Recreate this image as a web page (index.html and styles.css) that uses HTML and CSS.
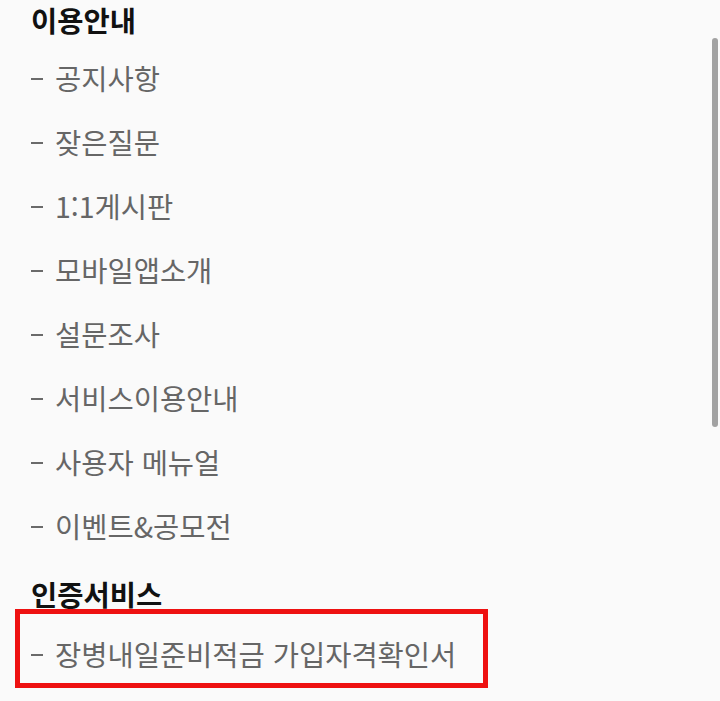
FILE: index.html
```html
<!DOCTYPE html>
<html lang="ko">
<head>
<meta charset="utf-8">
<link rel="stylesheet" href="styles.css">
</head>
<body>
<div class="page">
  <h2 class="heading">이용안내</h2>
  <ul class="menu">
    <li class="item"><span class="dash"></span>공지사항</li>
    <li class="item"><span class="dash"></span>잦은질문</li>
    <li class="item"><span class="dash"></span>1:1게시판</li>
    <li class="item"><span class="dash"></span>모바일앱소개</li>
    <li class="item"><span class="dash"></span>설문조사</li>
    <li class="item"><span class="dash"></span>서비스이용안내</li>
    <li class="item"><span class="dash"></span>사용자 메뉴얼</li>
    <li class="item"><span class="dash"></span>이벤트&amp;공모전</li>
  </ul>
  <h2 class="heading heading-2">인증서비스</h2>
  <div class="highlight">
    <div class="item item-hl"><span class="dash"></span>장병내일준비적금 가입자격확인서</div>
  </div>
</div>
<div class="scrollbar"></div>
</body>
</html>
```
FILE: styles.css
```css
html, body {
  margin: 0;
  padding: 0;
  background: #fafafa;
}
body {
  width: 720px;
  height: 701px;
  overflow: hidden;
  position: relative;
  font-family: "Noto Sans CJK KR", "Noto Sans", sans-serif;
}
.page {
  padding-left: 31px;
}
.heading {
  margin: 0;
  font-size: 28.5px;
  font-weight: 700;
  color: #111;
  line-height: 40px;
}
.menu {
  list-style: none;
  margin: 6px 0 0 0;
  padding: 0;
}
.item {
  font-size: 28.5px;
  color: #666;
  line-height: 64px;
  display: flex;
  align-items: center;
}
.dash {
  flex: none;
  width: 12px;
  height: 2px;
  background: #6a6a6a;
  margin-right: 12px;
  margin-top: 2px;
}
.heading-2 {
  margin-top: 20px;
  line-height: 31px;
}
.highlight {
  margin-left: -16px;
  width: 473px;
  border: 5px solid #ee1111;
  padding-left: 11px;
  height: 79px;
  box-sizing: border-box;
}
.item-hl {
  line-height: 59px;
  padding-top: 10px;
  height: 59px;
}
.scrollbar {
  position: absolute;
  left: 712px;
  top: 38px;
  width: 6px;
  height: 389px;
  border-radius: 3px;
  background: #a2a2a2;
}
```
